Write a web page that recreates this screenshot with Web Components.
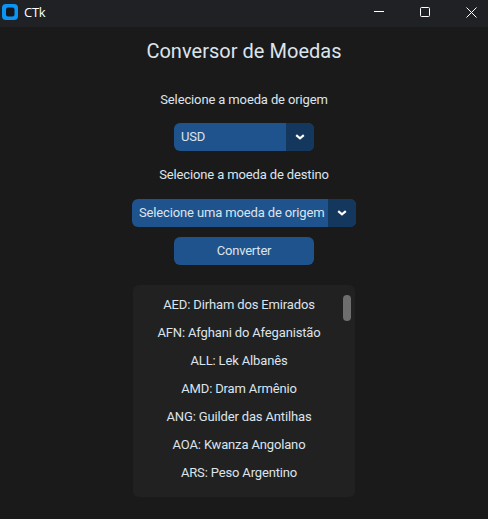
<!DOCTYPE html>
<html><head><meta charset="utf-8">
<style>
html,body{margin:0;padding:0;background:#1a1a1a;height:100%;overflow:hidden}
body{font-family:Roboto,"Liberation Sans",sans-serif;color:#dce4ee}
</style></head><body>
<ctk-window>
<ctk-titlebar slot="bar">CTk</ctk-titlebar>
<ctk-title>Conversor de Moedas</ctk-title>
<ctk-label style="margin-top:27px">Selecione a moeda de origem</ctk-label>
<ctk-combo style="margin-top:14px;width:140px">USD</ctk-combo>
<ctk-label style="margin-top:15px">Selecione a moeda de destino</ctk-label>
<ctk-combo style="margin-top:15px;width:224px">Selecione uma moeda de origem</ctk-combo>
<ctk-button style="margin-top:10px">Converter</ctk-button>
<ctk-list style="margin-top:20px">
<ctk-row>AED: Dirham dos Emirados</ctk-row>
<ctk-row>AFN: Afghani do Afeganistão</ctk-row>
<ctk-row>ALL: Lek Albanês</ctk-row>
<ctk-row>AMD: Dram Armênio</ctk-row>
<ctk-row>ANG: Guilder das Antilhas</ctk-row>
<ctk-row>AOA: Kwanza Angolano</ctk-row>
<ctk-row>ARS: Peso Argentino</ctk-row>
</ctk-list>
</ctk-window>
<script>
function def(name,css,html){
  customElements.define(name,class extends HTMLElement{
    constructor(){super();this.attachShadow({mode:'open'}).innerHTML='<style>'+css+'</style>'+html;}
  });
}
def('ctk-window',`:host{display:flex;flex-direction:column;width:488px;height:519px;background:#1a1a1a;overflow:hidden}
.body{display:flex;flex-direction:column;align-items:center}`,
`<slot name="bar"></slot><div class="body"><slot></slot></div>`);
def('ctk-titlebar',`:host{display:flex;align-items:center;height:27px;background:#1f2125;color:#fff;font:13px "Segoe UI","Open Sans","Liberation Sans",sans-serif;letter-spacing:-.3px}
.logo{margin:-3px 6px 0 2px;flex:none}
.t{flex:1;margin-top:-4px}
.b{width:46px;height:24px;display:flex;align-items:center;justify-content:center;margin-top:-3px}
.b:last-child{margin-right:-6px;margin-left:0}
.b svg{display:block}`,
`<svg class="logo" width="16" height="16" viewBox="0 0 16 16"><rect width="16" height="16" rx="4" fill="#0a95f5"/><rect x="4" y="3.5" width="8.5" height="9" rx="2" fill="#14181e"/></svg>
<span class="t"><slot></slot></span>
<span class="b"><svg width="10" height="2" viewBox="0 0 10 2"><rect y="0" width="10" height="1" fill="#fff"/></svg></span>
<span class="b"><svg width="10" height="10" viewBox="0 0 10 10"><rect x=".5" y=".5" width="9" height="9" rx="1" fill="none" stroke="#fff"/></svg></span>
<span class="b"><svg width="11" height="11" viewBox="0 0 11 11"><path d="M.5.5l10 10M10.5.5l-10 10" stroke="#fff" fill="none"/></svg></span>`);
def('ctk-title',`:host{display:block;margin-top:11px;font:20px/26px Roboto,sans-serif;letter-spacing:.03px;color:#dce4ee;white-space:nowrap}`,`<slot></slot>`);
def('ctk-label',`:host{display:block;font:13px/18px Roboto,sans-serif;letter-spacing:-.13px;color:#dce4ee;white-space:nowrap}`,`<slot></slot>`);
def('ctk-combo',`:host{display:flex;height:28px;border-radius:6px;overflow:hidden;background:#1f538d;color:#dce4ee;font:13px/28px Roboto,sans-serif;letter-spacing:-.14px;white-space:nowrap}
.v{flex:1;padding-left:7px;overflow:hidden}
.a{width:28px;flex:none;background:#14375e;display:flex;align-items:center;justify-content:center}`,
`<div class="v"><slot></slot></div><div class="a"><svg width="10" height="6" viewBox="0 0 10 6"><path d="M1.2 1.2L5 4.4L8.8 1.2" fill="none" stroke="#fff" stroke-width="2.2"/></svg></div>`);
def('ctk-button',`:host{display:block;width:140px;height:28px;border-radius:6px;background:#1f538d;color:#dce4ee;font:13px/28px Roboto,sans-serif;letter-spacing:-.2px;text-align:center}`,`<slot></slot>`);
def('ctk-list',`:host{display:block;position:relative;box-sizing:border-box;width:222px;height:212px;border-radius:6px;background:#212121;padding:6px 10px 0 0}
.sb{position:absolute;top:10px;right:4px;width:8px;height:26px;border-radius:4px;background:#6e6e6e}`,
`<slot></slot><div class="sb"></div>`);
def('ctk-row',`:host{display:block;height:28px;font:13px/28px Roboto,sans-serif;letter-spacing:-.15px;color:#dce4ee;text-align:center;white-space:nowrap}`,`<slot></slot>`);
</script>
</body></html>
